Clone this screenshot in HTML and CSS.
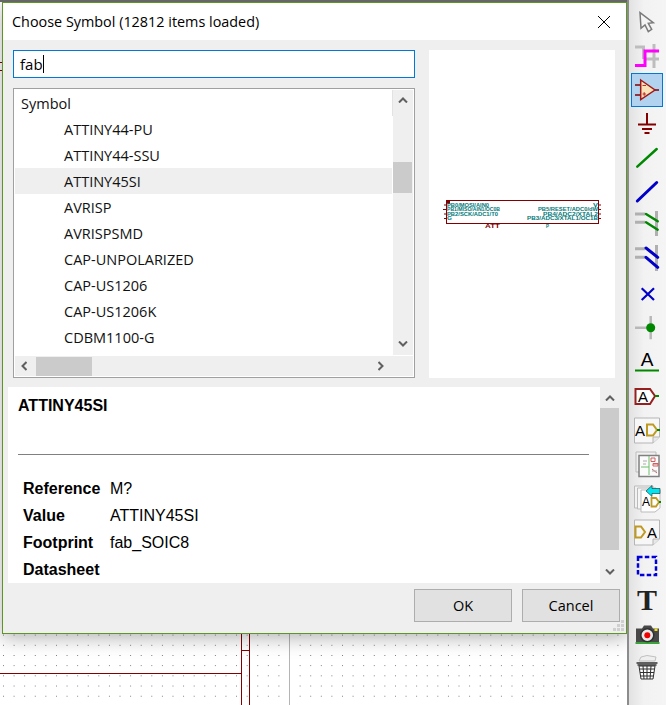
FILE: index.html
```html
<!DOCTYPE html>
<html lang="en">
<head>
<meta charset="utf-8">
<title>Choose Symbol</title>
<link rel="stylesheet" href="styles.css">
</head>
<body>
<div class="app">
  <div class="canvas">
    <svg class="schematic" width="627" height="705" viewBox="0 0 627 705">
      <path d="M0 62.5H3M0 70.5H3" stroke="#840000" fill="none"/>
      <path d="M241.5 630V705M249.5 630V705M0 673.5H241.5M241.5 650.5H249.5" stroke="#840000" fill="none"/>
      <path d="M289.5 630V705" stroke="#b4b4b4" fill="none"/>
    </svg>
    <div class="dialog">
      <div class="titlebar">
        <span class="title">Choose Symbol (12812 items loaded)</span>
        <svg class="close" width="14" height="14" viewBox="0 0 14 14"><path d="M1 1L13 13M13 1L1 13" stroke="#000" stroke-width="1" fill="none"/></svg>
      </div>
      <div class="top">
        <div class="left">
          <div class="search">fab<span class="caret"></span></div>
          <div class="list">
            <div class="tree">
              <div class="row head"><span>Symbol</span></div>
              <div class="row item">ATTINY44-PU</div>
              <div class="row item">ATTINY44-SSU</div>
              <div class="row item sel">ATTINY45SI</div>
              <div class="row item">AVRISP</div>
              <div class="row item">AVRISPSMD</div>
              <div class="row item">CAP-UNPOLARIZED</div>
              <div class="row item">CAP-US1206</div>
              <div class="row item">CAP-US1206K</div>
              <div class="row item">CDBM1100-G</div>
            </div>
            <div class="vscroll">
              <svg class="arrow-up" width="10" height="6" viewBox="0 0 10 6"><path d="M1 5.5L5 1.5L9 5.5" stroke="#606060" stroke-width="2" fill="none"/></svg>
              <div class="vthumb"></div>
              <svg class="arrow-down" width="10" height="6" viewBox="0 0 10 6"><path d="M1 .5L5 4.5L9 .5" stroke="#606060" stroke-width="2" fill="none"/></svg>
            </div>
            <div class="hscroll">
              <svg class="arrow-left" width="6" height="10" viewBox="0 0 6 10"><path d="M5.5 1L1.5 5L5.5 9" stroke="#606060" stroke-width="2" fill="none"/></svg>
              <div class="hthumb"></div>
              <svg class="arrow-right" width="6" height="10" viewBox="0 0 6 10"><path d="M.5 1L4.5 5L.5 9" stroke="#606060" stroke-width="2" fill="none"/></svg>
            </div>
          </div>
        </div>
        <div class="preview">
          <svg width="186" height="328" viewBox="429 50 186 328" class="symbol">
            <rect x="446.5" y="200.5" width="152" height="23" fill="none" stroke="#840000"/>
            <rect x="446" y="200" width="4" height="4" fill="#840000"/>
            <path d="M444 205H447M443 209.500H447M444 214H447M444 218.500H447M598 205H601M598 209.500H601M598 214H601M598 218.500H601" stroke="#840000" fill="none"/>
            <g class="pintext">
              <text x="447" y="206.500" textLength="42" lengthAdjust="spacingAndGlyphs">PB0/MOSI/AIN0</text>
              <text x="447" y="211" textLength="53" lengthAdjust="spacingAndGlyphs">PB1/MISO/AIN1/OC0B</text>
              <text x="447" y="215.500" textLength="51" lengthAdjust="spacingAndGlyphs">PB2/SCK/ADC1/T0</text>
              <text x="447" y="220" textLength="5" lengthAdjust="spacingAndGlyphs">G</text>
              <text x="593" y="206.500" textLength="5" lengthAdjust="spacingAndGlyphs">V</text>
              <text x="538" y="211" textLength="60" lengthAdjust="spacingAndGlyphs">PB5/RESET/ADC0/dW</text>
              <text x="543" y="215.500" textLength="55" lengthAdjust="spacingAndGlyphs">PB4/ADC2/XTAL2</text>
              <text x="527" y="220" textLength="71" lengthAdjust="spacingAndGlyphs">PB3/ADC3/XTAL1/OC1B</text>
            </g>
            <text class="reftext" x="485" y="228" textLength="15" lengthAdjust="spacingAndGlyphs">ATT</text>
            <text class="valtext" x="546" y="228" textLength="3" lengthAdjust="spacingAndGlyphs">P</text>
          </svg>
        </div>
      </div>
      <div class="details">
        <div class="info">
          <div class="name">ATTINY45SI</div>
          <div class="rule"></div>
          <div class="fields">
            <div class="key">Reference</div><div>M?</div>
            <div class="key">Value</div><div>ATTINY45SI</div>
            <div class="key">Footprint</div><div>fab_SOIC8</div>
            <div class="key">Datasheet</div><div></div>
          </div>
        </div>
        <div class="dscroll">
          <div class="dbtn-top"><svg width="10" height="6" viewBox="0 0 10 6"><path d="M1 5.500L5 1.500L9 5.500" stroke="#606060" stroke-width="2" fill="none"/></svg></div>
          <div class="dthumb"></div>
          <div class="dbtn-bottom"><svg width="10" height="6" viewBox="0 0 10 6"><path d="M1 .5L5 4.500L9 .5" stroke="#606060" stroke-width="2" fill="none"/></svg></div>
        </div>
      </div>
      <div class="actions">
        <button class="btn">OK</button>
        <button class="btn">Cancel</button>
      </div>
      <svg class="grip" width="12" height="12" viewBox="0 0 12 12"><path d="M8 0h3v3H8zM4 4h3v3H4zM8 4h3v3H8zM0 8h3v3H0zM4 8h3v3H4zM8 8h3v3H8z" fill="#cfcfcf"/></svg>
    </div>
  </div>
  <div class="toolbar">
    <div class="tool"><svg width="32" height="34" viewBox="0 0 32 34"><path d="M9 7.700L10 23.300L14 20L17.300 26.700L20.700 24.300L17.300 18.300L22.300 17.700Z" fill="#f4f4f4" stroke="#7a7a7a" stroke-width="1.500"/></svg></div>
    <div class="tool"><svg width="32" height="34" viewBox="0 0 32 34"><path d="M4 8H12.500V20M14 20H28M23 5V29" stroke="#bdbdbd" stroke-width="3" fill="none"/><path d="M4 26.500H14V12H28" stroke="#ff00ff" stroke-width="3" fill="none"/></svg></div>
    <div class="tool active"><svg width="32" height="34" viewBox="0 0 32 34"><path d="M4 12H10M4 22H10M24 17H28" stroke="#840000" stroke-width="1.500" fill="none"/><path d="M9.700 7L24 17L9.700 26.500Z" fill="#fbe3b9" stroke="#a01818" stroke-width="1.500"/><path d="M11.500 12.500H15M11.500 21H15M13.200 19.200V22.800" stroke="#c03030" stroke-width="1.200" fill="none"/></svg></div>
    <div class="tool"><svg width="32" height="34" viewBox="0 0 32 34"><path d="M16 6V17M7 17.500H25M11 22H21M13.500 26H18.500" stroke="#840000" stroke-width="2" fill="none"/></svg></div>
    <div class="tool"><svg width="32" height="34" viewBox="0 0 32 34"><path d="M6.300 25.700L25.700 8" stroke="#008800" stroke-width="2.500" stroke-linecap="round" fill="none"/></svg></div>
    <div class="tool"><svg width="32" height="34" viewBox="0 0 32 34"><path d="M6.300 26L25.700 7.500" stroke="#0000c8" stroke-width="3" stroke-linecap="round" fill="none"/></svg></div>
    <div class="tool"><svg width="32" height="34" viewBox="0 0 32 34"><path d="M25.500 2V27M4 5H14M4 13.300H14" stroke="#b0b0b0" stroke-width="3" fill="none"/><path d="M15 5L26.700 12.300M15 13.300L26.700 20.700" stroke="#008800" stroke-width="2.500" stroke-linecap="round" fill="none"/></svg></div>
    <div class="tool"><svg width="32" height="34" viewBox="0 0 32 34"><path d="M25.500 2V28M4 5.700H14M4 14.300H14" stroke="#b0b0b0" stroke-width="3" fill="none"/><path d="M15 5L26.700 14.300M15 14.300L26.700 24.300" stroke="#0000c8" stroke-width="3" stroke-linecap="round" fill="none"/></svg></div>
    <div class="tool"><svg width="32" height="34" viewBox="0 0 32 34"><path d="M10.700 11.300L23 23M23 11.300L10.700 23" stroke="#0000c8" stroke-width="2.200" fill="none"/></svg></div>
    <div class="tool"><svg width="32" height="34" viewBox="0 0 32 34"><path d="M4 16.700H24M19.700 5V28.300" stroke="#b8b8b8" stroke-width="2.500" fill="none"/><circle cx="19.700" cy="16.700" r="4.500" fill="#008800"/></svg></div>
    <div class="tool"><svg width="32" height="34" viewBox="0 0 32 34"><text class="glyph-a" x="16" y="21" font-size="19">A</text><path d="M4 25.500H28" stroke="#008800" stroke-width="2" fill="none"/></svg></div>
    <div class="tool"><svg width="32" height="34" viewBox="0 0 32 34"><path d="M4.500 10H19L24 17L19 25H4.500Z" fill="#fff" stroke="#962020" stroke-width="2"/><path d="M24 17H28" stroke="#008800" stroke-width="2" fill="none"/><text class="glyph-a" x="12" y="23" font-size="15">A</text></svg></div>
    <div class="tool"><svg width="32" height="34" viewBox="0 0 32 34"><path d="M3.500 5H28.500V24L22 30H3.500Z" fill="#f7f7f7" stroke="#b5b5b5"/><path d="M22 30V24H28.500" fill="#e8e8e8" stroke="#b5b5b5"/><text class="glyph-a" x="9" y="22.500" font-size="15">A</text><path d="M16 11.500H22L26 17L22 22.500H16Z" fill="none" stroke="#c09a20" stroke-width="2"/><path d="M26 17H29" stroke="#008800" stroke-width="2" fill="none"/></svg></div>
    <div class="tool"><svg width="32" height="34" viewBox="0 0 32 34"><path d="M5 5H25V25H5Z" fill="#f0f0f0" stroke="#bbb"/><path d="M8 8.500H28V29.500H8Z" fill="#fbfbfb" stroke="#808080" stroke-width="1.500"/><path d="M18 9V28M10 20H18" stroke="#6fbf6f" fill="none"/><path d="M20 11H24V14.500H20ZM22 17H28M21 22L26 26M22 16.500H27V19H22Z" stroke="#d06060" fill="none"/><path d="M12 14H16M12 17H15M21 24H26" stroke="#aaa" fill="none"/></svg></div>
    <div class="tool"><svg width="32" height="34" viewBox="0 0 32 34"><path d="M3.500 5H22V27H3.500Z" fill="#f2f2f2" stroke="#bbb"/><path d="M6.500 7H25V28H6.500Z" fill="#f6f6f6" stroke="#bbb"/><path d="M10 9H29V27L24 31H10Z" fill="#fdfdfd" stroke="#bbb"/><text class="glyph-a" x="15" y="25" font-size="12">A</text><path d="M20.500 17H25L28 21L25 25.500H20.500Z" fill="none" stroke="#c09a20" stroke-width="1.800"/><path d="M28 21H30" stroke="#008800" stroke-width="2" fill="none"/><path d="M15 10L21 4.500V7.500H29V12.500H21V15.500Z" fill="#00e6f0" stroke="#222" stroke-width=".6"/></svg></div>
    <div class="tool"><svg width="32" height="34" viewBox="0 0 32 34"><path d="M3.500 5H28.500V24L22 30H3.500Z" fill="#f7f7f7" stroke="#b5b5b5"/><path d="M22 30V24H28.500" fill="#e8e8e8" stroke="#b5b5b5"/><path d="M4.500 11.500H10L14 17L10 22.500H4.500Z" fill="none" stroke="#c09a20" stroke-width="2"/><text class="glyph-a" x="21" y="22.500" font-size="15">A</text></svg></div>
    <div class="tool"><svg width="32" height="34" viewBox="0 0 32 34"><rect x="7" y="8" width="18" height="18" fill="none" stroke="#0000d8" stroke-width="2.500" stroke-dasharray="4.500 2.300"/></svg></div>
    <div class="tool"><svg width="32" height="34" viewBox="0 0 32 34"><text class="glyph-t" x="16" y="27" font-size="30">T</text></svg></div>
    <div class="tool"><svg width="32" height="34" viewBox="0 0 32 34"><path d="M5 11.500H11L13 8.500H20L22 11.500H28V25H5Z" fill="#484848"/><circle cx="16.300" cy="18.300" r="6.500" fill="#e8e8e8" stroke="#303030" stroke-width="1.500"/><circle cx="16.300" cy="18.300" r="3" fill="#f00000"/><rect x="23.500" y="11.500" width="3" height="2.500" fill="#f0e020"/><path d="M4.500 26H28.500" stroke="#008800" stroke-width="1.500" fill="none"/></svg></div>
    <div class="tool"><svg width="32" height="34" viewBox="0 0 32 34"><path d="M8 10L10 6L16 4.500L25 6L24 10Z" fill="#efefef" stroke="#c0c0c0"/><path d="M5.500 12H26.500M6.500 14H25.500" stroke="#303030" stroke-width="1.500" fill="none"/><path d="M8 15L10 28H22L24 15Z" fill="#fff" stroke="#303030" stroke-width="1"/><path d="M12 15L13 28M16 15V28M20 15L19 28M8.500 18H23.500M9 21.500H23M9.500 25H22.500" stroke="#303030" stroke-width="1" fill="none"/></svg></div>
  </div>
</div>
</body>
</html>
```

FILE: styles.css
```css
* { box-sizing: border-box; }
html, body { margin: 0; padding: 0; }
body {
  width: 666px;
  height: 705px;
  overflow: hidden;
  font-family: "Open Sans", "Noto Sans", sans-serif;
  color: #000;
}
.app { display: flex; width: 666px; height: 705px; }

/* schematic canvas */
.canvas {
  position: relative;
  width: 627px;
  height: 705px;
  overflow: hidden;
  background-color: #fff;
  background-image: radial-gradient(circle at .5px .5px, #777 .7px, transparent .8px);
  background-size: 10.6px 10.2px;
  background-position: 3px 1px;
  border-top: 2px solid #666;
}
.schematic { position: absolute; left: 0; top: -2px; }

/* dialog */
.dialog {
  position: absolute;
  left: 2px;
  top: 0;
  width: 625px;
  height: 632px;
  display: flex;
  flex-direction: column;
  border: 1px solid #5f9426;
  background: #efefef;
  box-shadow: 0 4px 18px rgba(0, 0, 0, .3);
}
.titlebar {
  flex: none;
  height: 37px;
  padding: 0 15px 0 9px;
  display: flex;
  align-items: center;
  justify-content: space-between;
  background: #fff;
}
.title { font-size: 14.4px; }
.top {
  flex: none;
  display: flex;
  gap: 14px;
  padding: 10px 0 0 10px;
}
.left {
  width: 402px;
  display: flex;
  flex-direction: column;
  gap: 10px;
}
.search {
  height: 28px;
  padding-left: 6px;
  display: flex;
  align-items: center;
  font-size: 15px;
  background: #fff;
  border: 1px solid #0078d7;
}
.caret { width: 1px; height: 18px; background: #000; }

/* tree list */
.list {
  height: 290px;
  padding: 1px;
  display: grid;
  grid-template-columns: 378px 20px;
  grid-template-rows: 265px 20px;
  row-gap: 1px;
  background: #fff;
  border: 1px solid #a0a0a0;
}
.tree { overflow: hidden; background: #fff; }
.row {
  height: 26px;
  display: flex;
  align-items: center;
  font-size: 14.5px;
  color: #111;
}
.head { padding-left: 6px; }
.head span { flex: 1; }
.head { border-right: 1px solid #e3e3e3; }
.item { padding-left: 49px; }
.sel { background: #efefef; margin-right: 1px; }
.vscroll {
  display: flex;
  flex-direction: column;
  align-items: center;
  background: #efefef;
}
.arrow-up { margin-top: 7px; }
.vthumb {
  width: 19px;
  height: 31px;
  margin: 59px 1px 0 0;
  background: #cbcbcb;
}
.arrow-down { margin-top: 148px; }
.hscroll {
  grid-column: 1 / 3;
  display: flex;
  align-items: center;
  background: #efefef;
}
.arrow-left { margin-left: 6px; }
.hthumb {
  width: 56px;
  height: 19px;
  margin-left: 9px;
  background: #cbcbcb;
}
.arrow-right { margin-left: 286px; }
.preview { width: 186px; height: 328px; background: #fff; }
.symbol { display: block; }
.pintext text { font: bold 4.5px "Liberation Sans", sans-serif; fill: #007878; }
.reftext { font: bold 4.5px "Liberation Sans", sans-serif; fill: #840000; }
.valtext { font: bold 4.5px "Liberation Sans", sans-serif; fill: #007878; }

/* details */
.details {
  flex: none;
  display: flex;
  width: 611px;
  height: 196px;
  margin: 9px 0 0 5px;
  font: 16px/27px "Liberation Sans", Arial, sans-serif;
}
.info { width: 592px; padding-top: 10px; background: #fff; }
.name { padding-left: 10px; font-weight: bold; line-height: 18px; }
.rule { height: 1px; margin: 39px 11px 20px 10px; background: #808080; }
.fields {
  display: grid;
  grid-template-columns: 87px 1fr;
  grid-auto-rows: 27px;
  padding-left: 15px;
}
.key { font-weight: bold; }
.dscroll {
  width: 19px;
  display: flex;
  flex-direction: column;
  background: #efefef;
}
.dbtn-top { height: 21px; display: flex; align-items: center; justify-content: center; }
.dthumb { height: 142px; background: #cbcbcb; }
.dbtn-bottom { flex: 1; padding-top: 19px; display: flex; justify-content: center; }
.dbtn-bottom svg { display: block; }

/* buttons */
.actions {
  flex: none;
  display: flex;
  justify-content: flex-end;
  gap: 10px;
  margin-top: 6px;
  padding-right: 6px;
}
.btn {
  width: 98px;
  height: 33px;
  padding: 0;
  font: 14.5px "Open Sans", "Noto Sans", sans-serif;
  color: #000;
  background: #e1e1e1;
  border: 1px solid #adadad;
  border-radius: 0;
}
.grip { position: absolute; right: 1px; bottom: 1px; }

/* toolbar */
.toolbar {
  width: 39px;
  height: 705px;
  padding: 5px 0 0 2px;
  display: flex;
  flex-direction: column;
  background: linear-gradient(to right, #e2e2e2, #f2f2f2 40%, #f5f5f5);
  border-left: 2px solid #8c8c8c;
}
.tool { width: 32px; height: 34px; flex: none; }
.tool svg { display: block; overflow: visible; }
.active { background: #b1d3f0; outline: 1px solid #0078d7; outline-offset: -1px; }
.glyph-a { font-family: "Liberation Sans", sans-serif; text-anchor: middle; fill: #000; }
.glyph-t { font-family: "Liberation Serif", serif; font-weight: bold; text-anchor: middle; fill: #222; }
```
